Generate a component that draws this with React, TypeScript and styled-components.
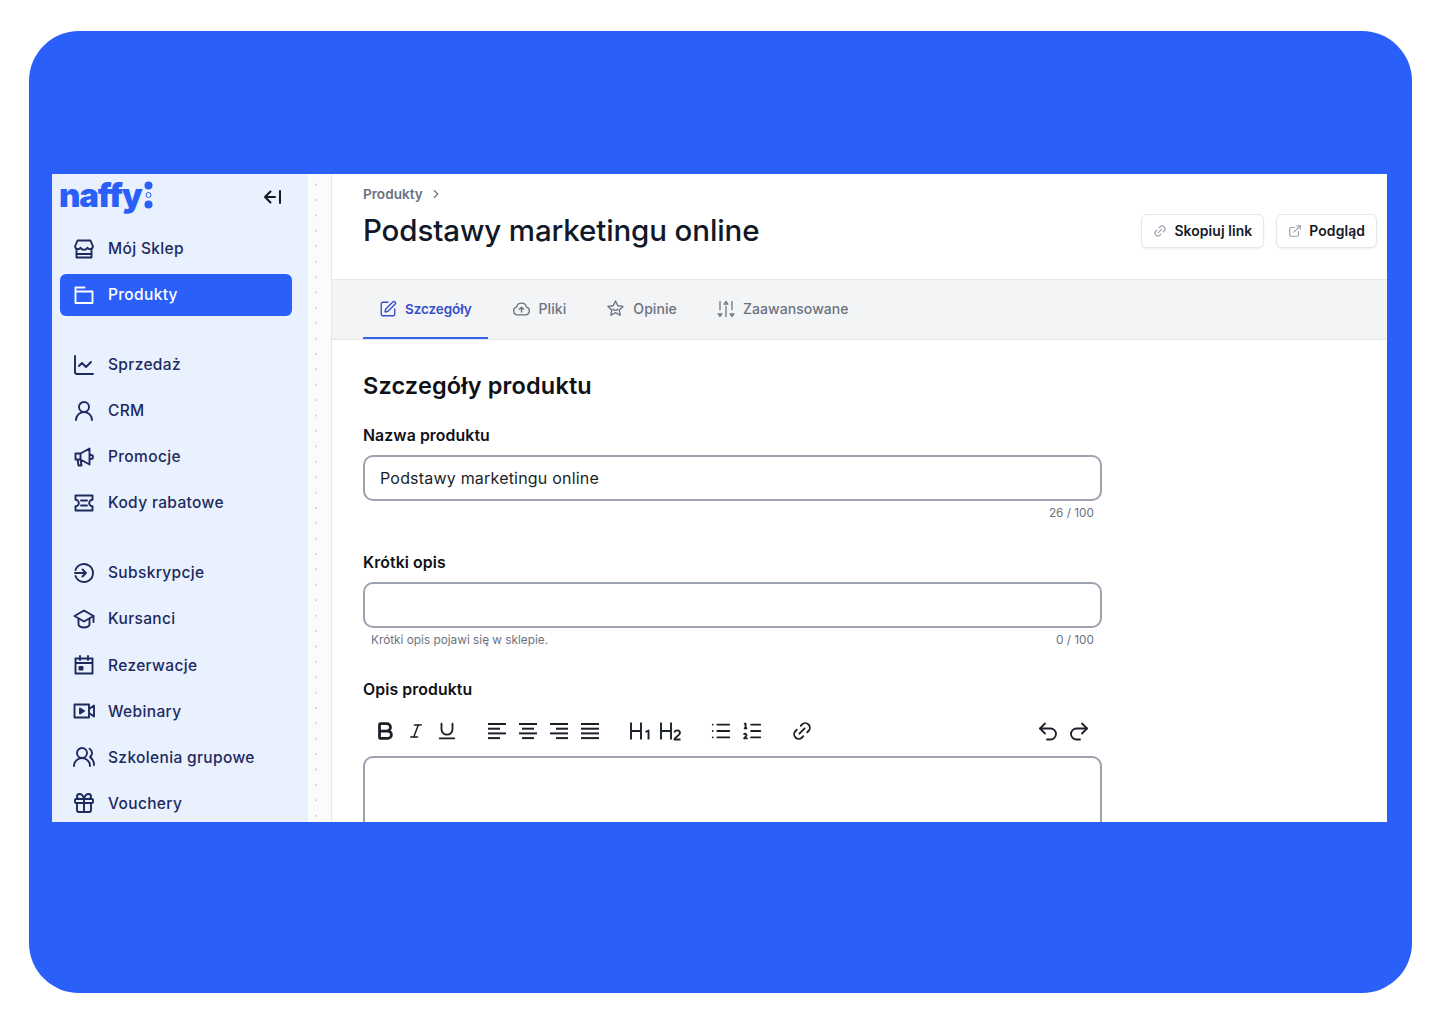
import React from "react";
import styled, { createGlobalStyle } from "styled-components";
import {
  Bold,
  ChartLine,
  ChevronRight,
  ExternalLink,
  Gift,
  Italic,
  Link2,
  List,
  ListOrdered,
  Redo2,
  SquarePen,
  Underline,
  Undo2,
  UserRound,
  UsersRound,
} from "lucide-react";

const FONT = `Inter, "Open Sans", "Liberation Sans", sans-serif`;

const GlobalStyle = createGlobalStyle`
  html, body { margin: 0; padding: 0; background: #fff; }
  body { font-family: ${FONT}; }
  * { box-sizing: border-box; }
`;

const Card = styled.div`
  width: 1383px;
  height: 962px;
  margin: 31px 0 31px 29px;
  padding: 143px 25px 0 23px;
  background: #2a5ff9;
  border-radius: 50px;
`;

const Screen = styled.div`
  display: flex;
  height: 648px;
  background: #fff;
  overflow: hidden;
`;

const Sidebar = styled.aside`
  flex: 0 0 256px;
  padding: 0 16px 0 8px;
  background: #e9f0fe;
`;

const LogoRow = styled.div`
  display: flex;
  align-items: center;
  justify-content: space-between;
  height: 53.5px;
  padding-bottom: 8px;
  color: #14181f;
`;

const Logo = styled.div`
  display: flex;
  align-items: center;
  gap: 2px;
  margin: -4px 0 0 -1px;
  color: #2a5ff9;
  font-size: 33px;
  font-weight: 900;
  line-height: 40px;
  letter-spacing: -1.2px;
`;

const CollapseButton = styled.span`
  display: flex;
  margin-right: 7px;
`;

const NavGroup = styled.nav`
  display: flex;
  flex-direction: column;
  gap: 4.1px;
  margin-bottom: 28px;
`;

const NavItem = styled.div<{ $active?: boolean }>`
  display: flex;
  align-items: center;
  gap: 12px;
  flex: 0 0 42px;
  padding-left: 12px;
  border-radius: 6px;
  background: ${(p) => (p.$active ? "#2a5ff9" : "transparent")};
  color: ${(p) => (p.$active ? "#fff" : "#1d2a5e")};
  font-size: 15.5px;
  font-weight: 500;
  letter-spacing: 0.35px;
`;

const DotStrip = styled.div`
  flex: 0 0 24px;
  background-color: #fbfbfc;
  background-image: radial-gradient(circle, #d7d9de 0.8px, transparent 1px);
  background-position: -4px 3px;
  background-size: 24px 15.4px;
  border-right: 1px solid #e5e7eb;
`;

const Main = styled.main`
  flex: 1;
  min-width: 0;
`;

const Header = styled.header`
  display: flex;
  justify-content: space-between;
  height: 106px;
  padding: 10px 10px 0 31px;
  border-bottom: 1px solid #e5e7eb;
`;

const Breadcrumb = styled.div`
  display: flex;
  align-items: center;
  gap: 6px;
  color: #6b7280;
  font-size: 13.6px;
  font-weight: 600;
  line-height: 20px;
`;

const Title = styled.h1`
  margin: 6px 0 0;
  color: #111827;
  font-size: 29.5px;
  font-weight: 500;
  line-height: 40px;
  letter-spacing: -0.12px;
`;

const HeaderActions = styled.div`
  display: flex;
  gap: 12px;
  margin-top: 30px;
  align-self: flex-start;
`;

const ActionButton = styled.button`
  display: flex;
  align-items: center;
  gap: 7px;
  height: 34px;
  padding: 0 11px;
  border: 1px solid #e5e7eb;
  border-radius: 6px;
  background: #fff;
  box-shadow: 0 1px 2px rgba(17, 24, 39, 0.08);
  color: #14181f;
  font-family: ${FONT};
  font-size: 13.9px;
  font-weight: 600;
  letter-spacing: 0.1px;
  svg { color: #9ca3af; }
`;

const Tabs = styled.div`
  display: flex;
  gap: 8px;
  height: 60px;
  padding-left: 31px;
  background: #f3f4f6;
  border-bottom: 1px solid #e5e7eb;
`;

const Tab = styled.div<{ $active?: boolean }>`
  display: flex;
  align-items: center;
  gap: 8px;
  height: 59px;
  padding: 0 16px;
  border-bottom: 2px solid ${(p) => (p.$active ? "#3563e9" : "transparent")};
  color: ${(p) => (p.$active ? "#3650c9" : "#6b7280")};
  font-size: ${(p) => (p.$active ? "13.5px" : "14px")};
  font-weight: ${(p) => (p.$active ? 600 : 500)};
  letter-spacing: ${(p) => (p.$active ? "-0.1px" : "0.08px")};
`;

const Content = styled.section`
  padding: 31px 285px 0 31px;
`;

const SectionTitle = styled.h2`
  margin: 0 0 24px;
  color: #0f1116;
  font-size: 23.5px;
  font-weight: 600;
  line-height: 30px;
  letter-spacing: 0.15px;
`;

const Field = styled.div`
  margin-bottom: 32px;
`;

const Label = styled.label`
  display: block;
  height: 20px;
  color: #0f1116;
  font-size: 15.8px;
  font-weight: 600;
  line-height: 22px;
  letter-spacing: 0.1px;
`;

const InputBox = styled.div`
  display: flex;
  align-items: center;
  height: 46px;
  margin-top: 10px;
  padding: 0 15px 1px;
  border: 2px solid #9ca3af;
  border-radius: 10px;
  color: #1b1f27;
  font-size: 16px;
  letter-spacing: 0.2px;
`;

const Hints = styled.div`
  display: flex;
  justify-content: space-between;
  height: 15px;
  margin-top: 4px;
  padding: 0 8px;
  color: #6b7280;
  font-size: 11.8px;
  line-height: 16px;
`;

const Toolbar = styled.div`
  display: flex;
  justify-content: space-between;
  align-items: center;
  height: 50px;
  margin-top: 7px;
  padding: 0 11px 0 10px;
  color: #1b1f27;
`;

const ToolGroups = styled.div`
  display: flex;
  gap: 26px;
`;

const ToolGroup = styled.div`
  display: flex;
  gap: 7px;
`;

const Tool = styled.span`
  display: flex;
  align-items: center;
  justify-content: center;
  width: 24px;
  height: 24px;
`;

const Editor = styled.div`
  height: 120px;
  border: 2px solid #9ca3af;
  border-radius: 10px;
`;

const DOTS = (
  <svg width="9" height="28" viewBox="0 0 9 28" fill="none">
    <circle cx="4.5" cy="4.5" r="4" fill="#2a5ff9" />
    <circle cx="4.5" cy="14" r="2.5" stroke="#2a5ff9" strokeWidth="1" />
    <circle cx="4.5" cy="23.5" r="4" fill="#2a5ff9" />
  </svg>
);

const Icon = ({ children, size = 24, sw = 1.9 }: { children: React.ReactNode; size?: number; sw?: number }) => (
  <svg
    width={size}
    height={size}
    viewBox="0 0 24 24"
    fill="none"
    stroke="currentColor"
    strokeWidth={sw}
    strokeLinecap="round"
    strokeLinejoin="round"
  >
    {children}
  </svg>
);

const CollapseIcon = () => (
  <Icon sw={2}>
    <path d="M14 12H4M9.5 6.5 4 12l5.5 5.5M19 6v12" />
  </Icon>
);
const StoreIcon = () => (
  <Icon>
    <path d="M5.5 3.5h13L21 9.5a3 3 0 0 1-5.5 1.2 4 4 0 0 1-7 0A3 3 0 0 1 3 9.5z" />
    <path d="M4.5 12.5v8h15v-8M4.5 17h15" />
  </Icon>
);
const FolderIcon = () => (
  <Icon>
    <path d="M3.5 4.5h9M3.5 8.5h17v11.5h-17zM3.5 4.5v4" />
  </Icon>
);
const MegaphoneIcon = () => (
  <Icon>
    <path d="M3.5 8.5h5l9-5v16l-9-5h-5zM8.5 8.5v6M5.5 14.5l1 6h3l-1-6M17.5 10h1.5a2 2 0 0 1 0 4h-1.5" />
  </Icon>
);
const TicketIcon = () => (
  <Icon>
    <path d="M3.5 4.5h17v4.2a3.3 3.3 0 0 0 0 6.6v4.2h-17v-4.2a3.3 3.3 0 0 0 0-6.6zM9 9.5h6M9 14.5h6" />
  </Icon>
);
const SubscribeIcon = () => (
  <Icon>
    <path d="M3.5 9a9 9 0 1 1 0 6M3 12h11M10.5 8.5 14 12l-3.5 3.5" />
  </Icon>
);
const CapIcon = () => (
  <Icon>
    <path d="M12 3.5 2.5 9 12 14.5 21.5 9z" />
    <path d="M6.5 12v5.5c0 1.5 2.5 3 5.5 3s5.5-1.5 5.500-3V12M21.5 9v6" />
  </Icon>
);
const CalendarIcon = () => (
  <Icon>
    <path d="M3.5 5.5h17v15h-17zM3.5 10h17M8 3v4M16 3v4" />
    <path d="M7.5 14h3v2.5h-3z" fill="currentColor" />
  </Icon>
);
const WebinarIcon = () => (
  <Icon>
    <path d="M2.5 5.5h14.5v13H2.5zM17 10l5-3.5v11L17 14" />
    <path d="M8 9.5 12 12l-4 2.5z" fill="currentColor" />
  </Icon>
);
const UploadCircleIcon = () => (
  <Icon size={19} sw={1.7}>
    <path d="M7 20h10a5 5 0 0 0 1.3-9.8 6.5 6.5 0 0 0-12.6 0A5 5 0 0 0 7 20z" />
    <path d="M12 16.5v-6M9.3 13 12 10.3l2.7 2.7" />
  </Icon>
);
const StarIcon = () => (
  <Icon size={19} sw={1.7}>
    <path d="M12 2.5l2.9 6 6.6.9-4.8 4.6 1.2 6.5-5.900-3.2-5.900 3.2 1.2-6.5-4.800-4.600 6.600-.9z" />
    <path d="M9.2 12.5a3 3 0 0 0 5.6 0" />
  </Icon>
);
const AdvancedIcon = () => (
  <Icon size={18} sw={1.7}>
    <path d="M4 2v11M4 22l-2.5-3.5h5zM12 22V9M12 2 9.5 5.5h5zM20 2v11M20 22l-2.5-3.5h5z" />
  </Icon>
);
const H1Icon = () => (
  <svg width="24" height="24" viewBox="0 0 24 24" fill="none" stroke="currentColor" strokeWidth="1.9" strokeLinejoin="round">
    <path d="M3 3.5v17M13 3.5v17M3 12h10M17.5 13l3-1.500V20.5" />
  </svg>
);
const H2Icon = () => (
  <svg width="24" height="24" viewBox="0 0 24 24" fill="none" stroke="currentColor" strokeWidth="1.9" strokeLinejoin="round">
    <path d="M2 3.5v17M12 3.5v17M2 12h10M15.5 13.5a2.8 2.8 0 0 1 5.5.5c0 2.5-5.5 4-5.5 6.5h6" />
  </svg>
);

// lines of an alignment button, as [x1, x2] from top to bottom
const AlignIcon = ({ lines }: { lines: number[][] }) => (
  <Icon sw={2}>
    {lines.map(([a, b], i) => (
      <path key={i} d={`M${a} ${5 + i * 4.7}H${b}`} strokeLinecap="butt" />
    ))}
  </Icon>
);

const mainNav = [
  { label: "Mój Sklep", icon: <StoreIcon /> },
  { label: "Produkty", icon: <FolderIcon />, active: true },
];
const salesNav = [
  { label: "Sprzedaż", icon: <ChartLine size={24} strokeWidth={1.9} /> },
  { label: "CRM", icon: <UserRound size={24} strokeWidth={1.9} /> },
  { label: "Promocje", icon: <MegaphoneIcon /> },
  { label: "Kody rabatowe", icon: <TicketIcon /> },
];
const courseNav = [
  { label: "Subskrypcje", icon: <SubscribeIcon /> },
  { label: "Kursanci", icon: <CapIcon /> },
  { label: "Rezerwacje", icon: <CalendarIcon /> },
  { label: "Webinary", icon: <WebinarIcon /> },
  { label: "Szkolenia grupowe", icon: <UsersRound size={24} strokeWidth={1.9} /> },
  { label: "Vouchery", icon: <Gift size={24} strokeWidth={1.9} /> },
];

const tabs = [
  { label: "Szczegóły", icon: <SquarePen size={18} strokeWidth={1.8} />, active: true },
  { label: "Pliki", icon: <UploadCircleIcon /> },
  { label: "Opinie", icon: <StarIcon /> },
  { label: "Zaawansowane", icon: <AdvancedIcon /> },
];

const ti = { size: 22, strokeWidth: 2 };
const toolGroups = [
  [<Bold {...ti} strokeWidth={3} />, <Italic size={18} strokeWidth={2} />, <Underline {...ti} />],
  [
    <AlignIcon lines={[[3, 21], [3, 15], [3, 21], [3, 15]]} />,
    <AlignIcon lines={[[3, 21], [6, 18], [3, 21], [6, 18]]} />,
    <AlignIcon lines={[[3, 21], [9, 21], [3, 21], [9, 21]]} />,
    <AlignIcon lines={[[3, 21], [3, 21], [3, 21], [3, 21]]} />,
  ],
  [<H1Icon />, <H2Icon />],
  [<List {...ti} />, <ListOrdered {...ti} />],
  [<Link2 {...ti} style={{ transform: "rotate(-45deg)" }} />],
];

const renderNav = (items: { label: string; icon: React.ReactNode; active?: boolean }[]) => (
  <NavGroup>
    {items.map((item) => (
      <NavItem key={item.label} $active={item.active}>
        {item.icon}
        {item.label}
      </NavItem>
    ))}
  </NavGroup>
);

export default function App() {
  return (
    <>
      <GlobalStyle />
      <Card>
        <Screen>
          <Sidebar>
            <LogoRow>
              <Logo>
                naffy
                {DOTS}
              </Logo>
              <CollapseButton>
                <CollapseIcon />
              </CollapseButton>
            </LogoRow>
            {renderNav(mainNav)}
            {renderNav(salesNav)}
            {renderNav(courseNav)}
          </Sidebar>
          <DotStrip />
          <Main>
            <Header>
              <div>
                <Breadcrumb>
                  Produkty
                  <ChevronRight size={14} />
                </Breadcrumb>
                <Title>Podstawy marketingu online</Title>
              </div>
              <HeaderActions>
                <ActionButton>
                  <Link2 size={14} style={{ transform: "rotate(-45deg)" }} />
                  Skopiuj link
                </ActionButton>
                <ActionButton>
                  <ExternalLink size={14} />
                  Podgląd
                </ActionButton>
              </HeaderActions>
            </Header>
            <Tabs>
              {tabs.map((t) => (
                <Tab key={t.label} $active={t.active}>
                  {t.icon}
                  {t.label}
                </Tab>
              ))}
            </Tabs>
            <Content>
              <SectionTitle>Szczegóły produktu</SectionTitle>
              <Field>
                <Label>Nazwa produktu</Label>
                <InputBox>Podstawy marketingu online</InputBox>
                <Hints>
                  <span />
                  <span>26 / 100</span>
                </Hints>
              </Field>
              <Field>
                <Label>Krótki opis</Label>
                <InputBox />
                <Hints>
                  <span>Krótki opis pojawi się w sklepie.</span>
                  <span>0 / 100</span>
                </Hints>
              </Field>
              <Label>Opis produktu</Label>
              <Toolbar>
                <ToolGroups>
                  {toolGroups.map((group, i) => (
                    <ToolGroup key={i}>
                      {group.map((icon, j) => (
                        <Tool key={j}>{icon}</Tool>
                      ))}
                    </ToolGroup>
                  ))}
                </ToolGroups>
                <ToolGroup>
                  <Tool>
                    <Undo2 size={27} strokeWidth={1.8} />
                  </Tool>
                  <Tool>
                    <Redo2 size={27} strokeWidth={1.8} />
                  </Tool>
                </ToolGroup>
              </Toolbar>
              <Editor />
            </Content>
          </Main>
        </Screen>
      </Card>
    </>
  );
}
